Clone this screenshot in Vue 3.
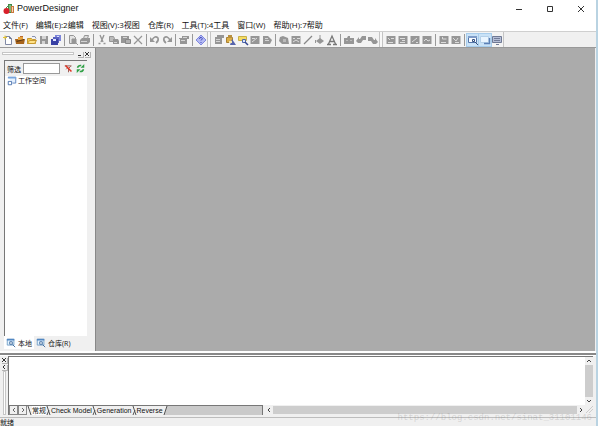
<script setup>
import { ref } from 'vue'

const menus = ['文件(F)', '编辑(E):2编辑', '视图(V):3视图', '仓库(R)', '工具(T):4工具', '窗口(W)', '帮助(H):7帮助']

const G = '#969696'
const L = '#d4d4d4'
const pic = (mark) => [
  { d: 'M1.5 2h9v8h-9z', f: G },
  { d: mark, s: '#dcdcdc' },
]
const icons = {
  new: [{ d: 'M3.500 2.500h4l2 2v6h-6z', f: '#fff', s: '#8089a5' }, { d: 'M7.500 2.500v2h2', s: '#6b7591' }, { d: 'M1 3.500h4M3 1.500v4', s: '#e6c432' }],
  open: [{ d: 'M1 5h10l-1 5H2z', f: '#a8641c' }, { d: 'M4 3h5v3H4z', f: '#e8a33c' }, { d: 'M2 7l8-2v1L3 8z', f: '#5b3a14' }, { d: 'M6 2.500h3', s: '#b86a30' }],
  folder: [{ d: 'M1.500 4.500h4l1 1h3v4h-8z', f: '#f2c94c', s: '#c89a30' }, { d: 'M3.500 6.500h7l-2 3h-7z', f: '#ffe28a', s: '#c89a30' }, { d: 'M6 2.500q4-1 4 2', s: '#8890b0' }],
  save: [{ d: 'M2 2h8v8H2z', f: G }, { d: 'M4 2h4v3H4zM4 7h3v3H4z', f: L }],
  saveall: [{ d: 'M5 1h6v6H5z', f: '#7c84d8' }, { d: 'M3 3h6v6H3z', f: '#5860c0' }, { d: 'M1 5h7v6H1z', f: '#3840a4' }, { d: 'M3 5h3v2H3zM7 2h2v1H7z', f: '#dfe4ff' }],
  preview: [{ d: 'M2.500 1.500h4l2 2v6h-6z', f: '#e4e4e4', s: G }, { d: 'M5 5h4v4H5zM8 8l3 3', f: G, s: G }],
  print: [{ d: 'M1 6l2-2h8v4l-2 2H1z', f: G }, { d: 'M4.500 4.500l1-3h4l-1 3z', f: '#ddd', s: G }, { d: 'M2 7.500h6', s: L }],
  cut: [{ d: 'M4 1l3 7M8 1L5 8M2.500 9.500h2M7.500 9.500h2', s: G, w: 1.4 }],
  copy: [{ d: 'M1.500 2.500h4l1 2v3h-5z', f: '#bbb', s: G }, { d: 'M5 5h5l1 2v3H5z', f: G }, { d: 'M6 8.500h3', s: L }],
  paste: [{ d: 'M1 2h8v7H1z', f: G }, { d: 'M5.500 5.500h5v4h-5z', f: '#b0b0b0', s: '#888' }, { d: 'M3 3.500h4', s: L }],
  del: [{ d: 'M2 2l8 8M10 2l-8 8', s: G, w: 1.2 }],
  undo: [{ d: 'M3 6q3-5 6-2q1 3-2 5', s: G, w: 1.6 }, { d: 'M1 3v5h5z', f: G }],
  redo: [{ d: 'M9 6q-3-5-6-2q-1 3 2 5', s: G, w: 1.6 }, { d: 'M11 3v5H6z', f: G }],
  props: [{ d: 'M4 2h7v3H9v5H2V5H1V4h3z', f: G }, { d: 'M3 6.500h4M5 3.500h4', s: L }],
  help: [{ d: 'M6 1l5 5-5 5-5-5z', f: '#b4baf2', s: '#8088e0' }, { d: 'M4.500 5q0-2 2-1.500q2 1-.5 3M6 8v1', s: '#4048c0' }],
  list: [{ d: 'M2 3h7v7H2z', f: G }, { d: 'M4 1h7v3H4z', f: G }, { d: 'M3 5.500h4M3 7.500h4', s: L }],
  pkg: [{ d: 'M1.500 3.500h6v5h-6z', f: '#dcae45', s: '#a88034' }, { d: 'M3 1h4v3H3z', f: '#b89040' }, { d: 'M7 5l4 6H5z', f: '#5664ac' }, { d: 'M4 7h3v2H4z', f: '#f4e6b0' }],
  find: [{ d: 'M1.500 2.500h8v4h-8z', f: '#f5dc62', s: '#c8b048' }, { d: 'M5.500 5.500h3v3h-3z', f: '#dbe6fa', s: '#4f67ad' }, { d: 'M8 8l3 3', s: '#34478e', w: 1.5 }],
  img: pic('M3 4.500h3M3 8l5-4'),
  doc: [{ d: 'M2 2h5l4 4-2 4H2z', f: G }, { d: 'M4 4.500h3M4 6.500h4', s: L }],
  bag: [{ d: 'M2 3l3-1 5 2 1 6H4L1 7z', f: G }, { d: 'M5 5h3v3H5z', f: '#bbb' }],
  grid: pic('M3 4.500h2M7 4.500h3M3 8l3-2 3 2'),
  line: [{ d: 'M2 10l8-8', s: '#888', w: 1.3 }],
  fill: [{ d: 'M2 7l4-3 4 3-4 3z', f: G }, { d: 'M6 1v5M1.500 6v3', s: G }],
  font: [{ d: 'M1 10.500h4M7 10.500h4M2.500 10L6 2l3.500 8M4 7.500h4', s: '#777', w: 1.3 }],
  camera: [{ d: 'M1 4h3l1-2h2v2h4v6H1z', f: G }, { d: 'M3 6.500h2M7 6.500h2', s: '#bbb' }],
  back: [{ d: 'M1 7l3-4v2h1l2-3h4v4H8L6 9H3z', f: G }],
  fwd: [{ d: 'M11 8L8 4v2H7L5 3H1v4h3l2 3h3z', f: G }],
  r1: pic('M3 4l2 2M6 4.500h3M3 8.500h5'),
  r2: pic('M3 4.500h5M5 6.500h3M3 8.500h5'),
  r3: pic('M3 8l5-4M7 8.500h2'),
  r4: pic('M3 7l2-2 2 2 2-1'),
  r5: pic('M4.500 3v2h4M3 8.500h5'),
  r6: pic('M3 4l3 3 2-3M5 8.500h4'),
  browser: [{ d: 'M1.500 2.500h8v6h-8z', f: '#f8fbff', s: '#5576a8' }, { d: 'M1 2h9v2H1z', f: '#7f9cc8' }, { d: 'M5.500 5.500h2v2h-2zM8 8l3 3', s: '#34507e' }],
  output: [{ d: 'M1.500 2.500h8v6h-8z', f: '#eaf5ff', s: '#b5d0e8' }, { d: 'M5 9.500h5.500V4', s: '#5c80b6', w: 1.4 }],
  result: [{ d: 'M1.500 2.500h9v6h-9z', f: '#b5bed6', s: '#6f7994' }, { d: 'M3 4.500h6M3 6.500h6M5 10.500h3', s: '#727c98' }],
  wrench: [{ d: 'M1 2.500h9M9 3L6 6v5M3 7l2-2', s: '#9a5d54', w: 1.3 }, { d: 'M2 2l8 8', s: '#e03020', w: 2 }],
  refresh: [{ d: 'M2 5q1-3.500 5-3M10 7q-1 3.500-5 3', s: '#2fa046', w: 2 }, { d: 'M6 5h5V0zM6 7H1v5z', f: '#2fa046' }],
  space: [{ d: 'M1.500 1.500h9v7h-4', f: '#e5f1ff', s: '#4d79b9' }, { d: 'M1 1h10v2H1z', f: '#78a6de' }, { d: 'M1.500 6.500h4v4h-4z', f: '#fff', s: '#3b66a6' }],
  search: [{ d: 'M1.500 1.500h8v7h-8z', f: '#e5f4ff', s: '#6899c4' }, { d: 'M1 1h9v2H1z', f: '#5187c2' }, { d: 'M4.500 4.500h3v3h-3zM8 8l3 3', f: '#fff', s: '#2d5c94', w: 1.3 }],
}

const bars = [
  [
    ['new', 'open', 'folder', 'save', 'saveall'],
    ['preview', 'print'],
    ['cut', 'copy', 'paste', 'del'],
    ['undo', 'redo'],
    ['props'],
    ['help'],
  ],
  [
    ['list', 'pkg', 'find', 'img', 'doc'],
    ['bag', 'grid', 'line', 'fill', 'font'],
    ['camera', 'back', 'fwd'],
  ],
  [
    ['r1', 'r2', 'r3', 'r4'],
    ['r5', 'r6'],
    ['browser', 'output', 'result'],
  ],
]
const pressed = ['browser', 'output']
const filter = ref('')
const outputTabs = ['常规', 'Check Model', 'Generation', 'Reverse']
const activeTab = ref('常规')
</script>

<template>
  <div class="app">
    <div class="window">
      <header class="title">
        <svg class="logo" viewBox="0 0 12 12">
          <rect x="5.500" y="1.500" width="3" height="8" fill="#7db87a" stroke="#3e8a48" />
          <rect x="8.500" y="3.500" width="2" height="6" fill="#f4d7b8" stroke="#c9783c" />
          <circle cx="3.500" cy="8" r="3" fill="#d8202a" />
          <path d="M3 5l3-3" stroke="#4e8a44" />
        </svg>
        <h1>PowerDesigner</h1>
        <div class="caption">
          <button aria-label="Minimize"><svg viewBox="0 0 8 8"><path d="M1 4.500h6" /></svg></button>
          <button aria-label="Maximize"><svg viewBox="0 0 8 8"><path d="M1.500 1.500h5v5h-5z" /></svg></button>
          <button aria-label="Close"><svg viewBox="0 0 8 8"><path d="M1 1l6 6M7 1L1 7" /></svg></button>
        </div>
      </header>

      <nav class="menu">
        <button v-for="m in menus" :key="m">{{ m }}</button>
      </nav>

      <div class="tools">
        <div v-for="(bar, b) in bars" :key="b" class="bar">
          <div v-for="(group, g) in bar" :key="g" class="group">
            <button v-for="name in group" :key="name" :aria-label="name" :class="{ pressed: pressed.includes(name) }">
              <svg viewBox="0 0 12 12">
                <path v-for="(p, i) in icons[name]" :key="i" :d="p.d" :fill="p.f || 'none'" :stroke="p.s || 'none'" :stroke-width="p.w || 1" />
              </svg>
            </button>
          </div>
        </div>
      </div>

      <main class="body">
        <aside class="side">
          <div class="dock">
            <span class="grip"></span>
            <button aria-label="Pin"><svg viewBox="0 0 6 6"><path d="M1 4.500h3" /></svg></button>
            <button aria-label="Close panel"><svg viewBox="0 0 6 6"><path d="M1 1l4 4M5 1L1 5" /></svg></button>
          </div>
          <section class="panel">
            <div class="filter">
              <label for="filter">筛选</label>
              <input id="filter" v-model="filter" type="text" />
              <button v-for="n in ['wrench', 'refresh']" :key="n" :aria-label="n">
                <svg viewBox="0 0 12 12">
                  <path v-for="(p, i) in icons[n]" :key="i" :d="p.d" :fill="p.f || 'none'" :stroke="p.s || 'none'" :stroke-width="p.w || 1" />
                </svg>
              </button>
            </div>
            <div class="tree">
              <svg viewBox="0 0 12 12">
                <path v-for="(p, i) in icons.space" :key="i" :d="p.d" :fill="p.f || 'none'" :stroke="p.s || 'none'" />
              </svg>
              <span>工作空间</span>
            </div>
          </section>
          <div class="side-tabs">
            <button v-for="(t, k) in ['本地', '仓库(R)']" :key="t" :class="{ on: k === 0 }">
              <svg viewBox="0 0 12 12">
                <path v-for="(p, i) in icons.search" :key="i" :d="p.d" :fill="p.f || 'none'" :stroke="p.s || 'none'" />
              </svg>
              <span>{{ t }}</span>
            </button>
          </div>
        </aside>
        <div class="workspace"></div>
      </main>

      <section class="output">
        <div class="handle">
          <button aria-label="Close output"><svg viewBox="0 0 6 6"><path d="M1 1l4 4M5 1L1 5" /></svg></button>
          <button aria-label="Pin output"><svg viewBox="0 0 6 6"><path d="M4 1L2 3l2 2" /></svg></button>
          <span></span>
        </div>
        <div class="out-main">
          <div class="log">
            <div class="vscroll">
              <svg viewBox="0 0 8 8"><path d="M2 5l2-2 2 2" /></svg>
              <span></span>
              <svg viewBox="0 0 8 8"><path d="M2 3l2 2 2-2" /></svg>
            </div>
          </div>
          <div class="strip">
            <div class="tabs">
              <button class="arrow" aria-label="Previous tab"><svg viewBox="0 0 8 8"><path d="M5 2L3 4l2 2" /></svg></button>
              <button class="arrow" aria-label="Next tab"><svg viewBox="0 0 8 8"><path d="M3 2l2 2-2 2" /></svg></button>
              <template v-for="(t, k) in outputTabs" :key="t">
                <svg class="edge" viewBox="0 0 5 9"><path :d="k ? 'M1 0l3 9M3 4L1 9' : 'M1 0l3 9'" /></svg>
                <button class="tab" :class="{ active: t === activeTab }" @click="activeTab = t">{{ t }}</button>
              </template>
              <svg class="last" viewBox="0 0 5 9"><path class="bg" d="M0 0h4L1 9H0z" /><path d="M4 0L1 9" /></svg>
              <span class="rest"></span>
            </div>
            <div class="hscroll">
              <svg viewBox="0 0 8 8"><path d="M5 2L3 4l2 2" /></svg>
              <span></span>
              <svg viewBox="0 0 8 8"><path d="M3 2l2 2-2 2" /></svg>
            </div>
            <svg class="corner" viewBox="0 0 8 8"><path d="M1 8l7-7M4 8l4-4" /></svg>
          </div>
        </div>
      </section>

      <footer class="status">就绪</footer>
    </div>
    <div class="watermark">https://blog.csdn.net/sinat_31101146</div>
  </div>
</template>

<style>
body {
  margin: 0;
  overflow: hidden;
}
</style>

<style scoped>
.app {
  position: relative;
  height: 100vh;
  overflow: hidden;
  font-family: "Open Sans", "Noto Sans CJK SC", sans-serif;
  color: #111;
}
.app * {
  box-sizing: border-box;
}
.window {
  display: flex;
  flex-direction: column;
  height: 100%;
  background: #f0f0f0;
  border-right: 2px solid #b9d3e2;
}
button {
  display: flex;
  align-items: center;
  justify-content: center;
  margin: 0;
  padding: 0;
  border: 0;
  background: none;
  font: inherit;
  color: inherit;
}
svg {
  display: block;
  flex: none;
}
.title {
  display: flex;
  align-items: center;
  flex: none;
  height: 17px;
  padding-left: 3px;
  background: #fff;
}
.logo {
  width: 12px;
  height: 12px;
  fill: none;
}
.title h1 {
  flex: 1;
  margin: 0;
  padding-left: 2px;
  font-family: "Liberation Sans", sans-serif;
  font-size: 9px;
  font-weight: 400;
  line-height: 17px;
}
.caption {
  display: flex;
}
.caption button {
  width: 31px;
  height: 17px;
}
.caption svg {
  width: 8px;
  height: 8px;
  fill: none;
  stroke: #333;
}
.menu {
  display: flex;
  flex: none;
  gap: 8px;
  height: 14px;
  padding-left: 3px;
  background: #fff;
  font-size: 8px;
  white-space: nowrap;
}
.tools {
  display: flex;
  flex: none;
  height: 17px;
  border-top: 1px solid #cfcfcf;
  border-bottom: 1px solid #999;
}
.bar {
  display: flex;
  align-items: center;
  padding-left: 5px;
  border-right: 1px solid #c4c4c4;
  background: #f3f3f3;
  box-shadow: inset 2px 0 #f8f8f8, inset 3px 0 #c4c4c4;
}
.bar:first-child {
  padding-left: 2px;
  box-shadow: none;
}
.group {
  display: flex;
}
.group + .group {
  margin-left: 2px;
  padding-left: 2px;
  border-left: 1px solid #999;
}
.group button,
.group svg {
  width: 12px;
  height: 12px;
}
.group .pressed {
  background: #c9e2f7;
  box-shadow: 0 0 0 1px #a8cdec;
}
.body {
  display: flex;
  flex: 1;
  min-height: 0;
}
.side {
  display: flex;
  flex-direction: column;
  flex: none;
  width: 96px;
  padding: 2px 8px 2px 4px;
  border-right: 1px solid #888;
}
.dock {
  display: flex;
  align-items: center;
  gap: 1px;
  height: 7px;
  margin-right: -3px;
  margin-left: -2px;
}
.grip {
  flex: 1;
  height: 3px;
  margin-right: 2px;
  border: 1px solid #c6c6c6;
  background: #fff;
}
.dock button,
.handle button {
  width: 6px;
  height: 6px;
  box-shadow: 1px 1px #b4b4b4;
}
.dock svg,
.handle svg {
  width: 6px;
  height: 6px;
  fill: none;
  stroke: #333;
}
.panel {
  display: flex;
  flex-direction: column;
  flex: 1;
  margin-top: 3px;
  border-top: 1px solid #777;
  border-left: 1px solid #777;
  background: #fff;
}
.filter {
  display: flex;
  align-items: center;
  height: 15px;
  padding-left: 2px;
  background: #f0f0f0;
  font-size: 7px;
}
.filter input {
  width: 37px;
  height: 11px;
  margin: 0 2px;
  padding: 0 2px;
  border: 1px solid #999;
  background: #fff;
  font-size: 7px;
}
.filter button {
  width: 12px;
}
.filter svg {
  width: 9px;
  height: 9px;
}
.tree {
  display: flex;
  align-items: center;
  gap: 1px;
  padding-left: 2px;
  font-size: 7px;
  line-height: 10px;
}
.tree svg,
.side-tabs svg {
  width: 10px;
  height: 10px;
}
.side-tabs {
  display: flex;
  height: 13px;
  font-size: 7px;
}
.side-tabs button {
  gap: 2px;
  padding: 0 2px;
}
.side-tabs .on {
  background: #fff;
}
.workspace {
  flex: 1;
  margin-right: 1px;
  background: #ababab;
}
.output {
  display: flex;
  flex: none;
  height: 67px;
  padding-bottom: 2px;
  border-top: 2px solid #fff;
  border-bottom: 1px solid #bdbdbd;
  box-shadow: inset 0 2px #888, inset 0 3px #fff;
}
.handle {
  display: flex;
  flex-direction: column;
  align-items: center;
  gap: 1px;
  width: 8px;
  padding: 4px 1px 0;
}
.handle span {
  flex: 1;
  width: 3px;
  border: 1px solid #c6c6c6;
  background: #fff;
}
.out-main {
  display: flex;
  flex: 1;
  flex-direction: column;
  min-width: 0;
  margin: 3px 3px 0 0;
  border-top: 1px solid #777;
  border-left: 1px solid #777;
}
.log {
  display: flex;
  flex: 1;
  justify-content: flex-end;
  background: #fff;
}
.vscroll {
  display: flex;
  flex-direction: column;
  width: 8px;
  background: #f0f0f0;
}
.vscroll svg,
.hscroll svg {
  width: 8px;
  height: 8px;
  fill: none;
  stroke: #444;
}
.vscroll span,
.hscroll span {
  flex: 1;
  background: #cdcdcd;
}
.strip {
  display: flex;
  flex: none;
  height: 10px;
}
.tabs {
  display: flex;
  width: 254px;
  border-right: 1px solid #777;
  border-top: 1px solid #777;
  background: #f0f0f0;
  font-family: "Liberation Sans", "Noto Sans CJK SC", sans-serif;
  font-size: 7px;
  line-height: 9px;
  white-space: nowrap;
}
.arrow {
  width: 9px;
  border: 1px solid #888;
  border-top: 0;
}
.arrow svg {
  width: 8px;
  height: 8px;
  fill: none;
  stroke: #666;
}
.edge,
.last {
  width: 5px;
  height: 9px;
  fill: none;
  stroke: #555;
}
.last {
  background: #cacaca;
}
.last .bg {
  fill: #f0f0f0;
  stroke: none;
}
.tab.active {
  background: #fff;
}
.rest {
  flex: 1;
  background: #cacaca;
}
.hscroll {
  display: flex;
  align-items: center;
  flex: 1;
  padding-left: 2px;
}
.hscroll span {
  height: 8px;
}
.corner {
  width: 8px;
  height: 8px;
  stroke: #ccc;
}
.status {
  flex: none;
  height: 8px;
  font-size: 7px;
  line-height: 10px;
  overflow: hidden;
}
.watermark {
  position: absolute;
  right: 6px;
  bottom: 2px;
  color: rgba(120, 120, 120, 0.25);
  font-family: "Liberation Mono", monospace;
  font-size: 9px;
  line-height: 11px;
  pointer-events: none;
}
</style>
